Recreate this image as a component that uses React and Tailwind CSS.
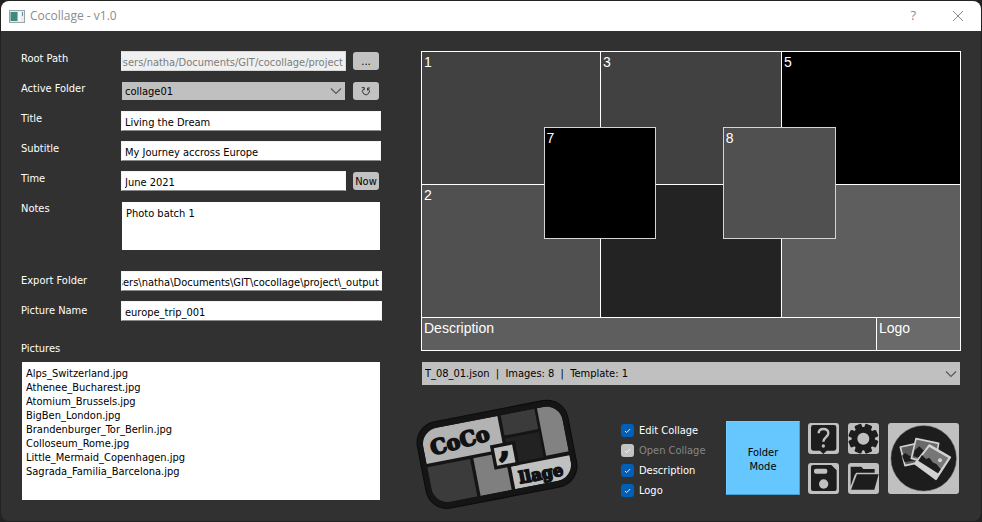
import { useEffect, useRef } from "react";

const inputClass =
  "block h-5 w-full min-w-0 border border-[#f4f4f4] border-b-[#8a8a8a] bg-white px-[3px] pt-0.5 text-[11px] leading-4 text-black outline-none";
const smallButton =
  "my-px mr-0.5 ml-[7px] flex h-[18px] w-[26px] flex-none items-center justify-center rounded-[3px] bg-[#c2c2c2] text-[11px] leading-none text-black";

const pictures = [
  "Alps_Switzerland.jpg",
  "Athenee_Bucharest.jpg",
  "Atomium_Brussels.jpg",
  "BigBen_London.jpg",
  "Brandenburger_Tor_Berlin.jpg",
  "Colloseum_Rome.jpg",
  "Little_Mermaid_Copenhagen.jpg",
  "Sagrada_Familia_Barcelona.jpg",
];

function Field({ id, label, tall, children }) {
  return (
    <div className="flex items-start">
      <label htmlFor={id} className={tall ? "w-25 flex-none leading-5" : "w-25 flex-none leading-4"}>
        {label}
      </label>
      <div className="flex min-w-0 flex-1">{children}</div>
    </div>
  );
}

// A path box that always shows the end of its path.
function PathInput({ id, value, disabled }) {
  const ref = useRef(null);
  useEffect(() => {
    ref.current.scrollLeft = ref.current.scrollWidth;
  }, []);
  return (
    <input
      id={id}
      ref={ref}
      defaultValue={value}
      disabled={disabled}
      className={
        disabled
          ? "block h-5 w-full min-w-0 border border-[#d8d8d8] border-l-[#f0f0f0] bg-[#f0f0f0] pt-0.5 pr-0.5 text-[11px] leading-4 text-[#7d7d7d]"
          : "block h-5 w-full min-w-0 border border-[#f4f4f4] border-b-[#8a8a8a] bg-white pt-0.5 pr-0.5 text-[11px] leading-4 text-black outline-none"
      }
    />
  );
}

function Combo({ id, label, className, children }) {
  return (
    <div className={className}>
      <select
        id={id}
        aria-label={label}
        className="block h-full w-full appearance-none bg-[#c0c0c0] pt-0.5 pr-6 pl-[3px] text-[11px] text-black outline-none"
      >
        {children}
      </select>
      <svg viewBox="0 0 12 8" className="pointer-events-none absolute top-1/2 right-[3px] h-2 w-3 -translate-y-1/2">
        <path d="M1 1.5 6 6.5 11 1.5" fill="none" stroke="#555" strokeWidth="1.1" />
      </svg>
    </div>
  );
}

function Check({ label, disabled }) {
  return (
    <label className={disabled ? "flex h-5 items-center gap-[5px] text-[#868686]" : "flex h-5 items-center gap-[5px] text-white"}>
      <span className="grid">
        <input
          type="checkbox"
          defaultChecked
          disabled={disabled}
          className="col-start-1 row-start-1 size-[13px] appearance-none rounded-[3px] bg-[#005fb8] disabled:bg-[#c3c3c3]"
        />
        <svg viewBox="0 0 13 13" className="pointer-events-none col-start-1 row-start-1 size-[13px]">
          <path d="M4 7 5.6 8.6 9.2 5" fill="none" stroke="#fff" strokeWidth="0.9" />
        </svg>
      </span>
      <span className="pt-0.5">{label}</span>
    </label>
  );
}

function Logo() {
  return (
    <svg viewBox="39 18 504 348" className="-ml-2 h-[116px] w-[168px] flex-none" role="img" aria-label="Cocollage">
      <defs>
        <clipPath id="plate">
          <rect x="-213" y="-113" width="426" height="226" rx="50" />
        </clipPath>
      </defs>
      <g transform="translate(291 193) rotate(-11)">
        <rect x="-230" y="-132" width="460" height="264" rx="64" fill="#151515" stroke="#0c0c0c" strokeWidth="3" />
        <g clipPath="url(#plate)">
          <rect x="-213" y="-113" width="236" height="101" fill="#b3b3b3" />
          <rect x="-213" y="-2" width="131" height="115" fill="#3b3b3b" />
          <rect x="-72" y="-2" width="95" height="115" fill="#7f7f7f" />
          <rect x="33" y="-113" width="103" height="62" fill="#3b3b3b" />
          <rect x="33" y="-42" width="103" height="77" fill="#222" />
          <rect x="144" y="-113" width="69" height="145" fill="#828282" />
          <rect x="34" y="44" width="179" height="69" fill="#c0c0c0" />
          <rect x="-16" y="-30" width="76" height="74" fill="#151515" />
          <rect x="-6" y="-20" width="56" height="54" fill="#c0c0c0" />
        </g>
      </g>
      <g fill="#121212" stroke="#121212" strokeWidth="5" strokeLinejoin="round" fontFamily="'DejaVu Serif', serif" fontWeight="700" textAnchor="middle">
        <text transform="translate(185 173) rotate(-15)" fontSize="62">
          CoCo
        </text>
        <text transform="translate(426 268) rotate(-11)" fontSize="49">
          llage
        </text>
        <text transform="translate(314 200) rotate(-4)" fontSize="90" strokeWidth="7">
          ,
        </text>
      </g>
    </svg>
  );
}

function IconButton({ label, children }) {
  return (
    <button type="button" aria-label={label} className="size-[31px] overflow-hidden rounded-[3px] bg-[#c0c0c0]">
      <svg viewBox="0 0 93 93" className="block size-full" fill="#1d1d1d">
        {children}
      </svg>
    </button>
  );
}

function PhotosIcon() {
  return (
    <svg viewBox="0 0 213 213" className="block size-full" strokeLinejoin="round">
      <circle cx="107" cy="106" r="98" fill="#1d1d1d" stroke="#555" strokeWidth="1.5" />
      <path d="M37 72 84 62 95 118 51 128Z" fill="#5c5c5c" stroke="#d2d2d2" strokeWidth="5" />
      <path d="M42 98 52 90 66 100 74 92 84 112 50 118Z" fill="#1d1d1d" />
      <path d="M84 47 152 61 140 124 70 106Z" fill="#6a6a6a" stroke="#d2d2d2" strokeWidth="5" />
      <path d="M80 82 94 70 106 82 116 76 110 108 76 100Z" fill="#1d1d1d" />
      <path d="M124 66 187 103 144 169 80 122Z" fill="#d2d2d2" stroke="#d2d2d2" strokeWidth="5" />
      <path d="M124 72 181 105 150 151 91 113Z" fill="#777" />
      <path d="M91 113 102 96 114 108 124 104 134 118 146 124 158 139 150 151Z" fill="#1d1d1d" />
      <circle cx="156" cy="112" r="6" fill="#d2d2d2" />
    </svg>
  );
}

export default function App() {
  return (
    <div className="flex min-h-screen bg-[#222] p-px font-['DejaVu_Sans_Condensed','Noto_Sans',sans-serif] text-[11px] text-white">
      <main className="flex flex-1 flex-col overflow-hidden rounded-lg bg-[#313131]">
        <header className="flex h-[30px] flex-none items-center bg-white pr-[17px] pl-2 font-['Open_Sans',sans-serif] text-xs text-[#8c8c8c]">
          <svg viewBox="0 0 16 13" className="mr-[5px] h-[13px] w-4">
            <rect x="0.5" y="0.5" width="15" height="12" fill="#e8eef0" stroke="#9aa5a8" />
            <rect x="1.5" y="2" width="7" height="9" fill="#3f8a80" />
            <rect x="9.5" y="2" width="2" height="9" fill="#fff" />
            <rect x="13" y="2" width="1" height="4" fill="#6f8c96" />
          </svg>
          <h1 className="flex-1">Cocollage - v1.0</h1>
          <button type="button" aria-label="Help" className="mr-9 text-[13px]">
            ?
          </button>
          <button type="button" aria-label="Close">
            <svg viewBox="0 0 12 12" className="block size-3">
              <path d="M1 1 11 11M11 1 1 11" stroke="#888" strokeWidth="1" />
            </svg>
          </button>
        </header>

        <div className="grid flex-1 grid-cols-[361px_1fr] gap-x-[39px] px-5 pt-5">
          <form className="flex flex-col">
            <div className="flex flex-col gap-2.5 pr-px">
              <Field id="root" label="Root Path">
                <PathInput id="root" value="C:/Users/natha/Documents/GIT/cocollage/project" disabled />
                <button type="button" className={smallButton}>
                  ...
                </button>
              </Field>
              <Field id="folder" label="Active Folder">
                <Combo id="folder" label="Active Folder" className="relative m-px h-[18px] flex-1">
                  <option>collage01</option>
                </Combo>
                <button type="button" aria-label="Refresh" className={smallButton}>
                  <svg viewBox="0 0 10 10" className="size-2.5">
                    <path d="M7 2.6A3.4 3.4 0 1 1 2.6 2.9M9 2H6.6V4.6M0.8 1.6H3.2V4" fill="none" stroke="#222" strokeWidth="0.9" />
                  </svg>
                </button>
              </Field>
              <Field id="title" label="Title">
                <input id="title" defaultValue="Living the Dream" className={inputClass} />
              </Field>
              <Field id="subtitle" label="Subtitle">
                <input id="subtitle" defaultValue="My Journey accross Europe" className={inputClass} />
              </Field>
              <Field id="time" label="Time">
                <input id="time" defaultValue="June 2021" className={inputClass} />
                <button type="button" className={smallButton}>
                  Now
                </button>
              </Field>
              <Field id="notes" label="Notes">
                <textarea
                  id="notes"
                  defaultValue="Photo batch 1"
                  className="m-px block h-12 flex-1 resize-none bg-white px-1 py-[5px] text-[11px] leading-[14px] text-black outline-none"
                />
              </Field>
            </div>

            <div className="mt-5 flex flex-col gap-2.5">
              <Field id="export" label="Export Folder" tall>
                <PathInput id="export" value="C:\Users\natha\Documents\GIT\cocollage\project\_output" />
              </Field>
              <Field id="name" label="Picture Name" tall>
                <input id="name" defaultValue="europe_trip_001" className={inputClass} />
              </Field>
            </div>

            <label htmlFor="pictures" className="mt-5 leading-4">
              Pictures
            </label>
            <select
              id="pictures"
              multiple
              className="mt-[5px] mr-0.5 mb-[21px] ml-px block flex-1 overflow-hidden bg-white px-1 py-[5px] text-[11px] text-black outline-none"
            >
              {pictures.map((name) => (
                <option key={name} className="h-3.5 min-h-0 p-0">
                  {name}
                </option>
              ))}
            </select>
          </form>

          <section className="flex flex-col">
            <div className="relative flex aspect-[9/5] w-full flex-col gap-px bg-white p-px font-['Liberation_Sans',sans-serif] text-sm leading-5">
              <div className="grid flex-1 grid-cols-[178fr_180fr_178fr] grid-rows-2 gap-px">
                <div className="bg-[#414141] pl-0.5">1</div>
                <div className="bg-[#414141] pl-0.5">3</div>
                <div className="bg-black pl-0.5">5</div>
                <div className="bg-[#505050] pl-0.5">2</div>
                <div className="bg-[#232323]" />
                <div className="bg-[#5e5e5e]" />
              </div>
              <div className="flex h-8 gap-px">
                <div className="flex-1 bg-[#5e5e5e] pl-0.5">Description</div>
                <div className="w-[83px] bg-[#6a6a6a] pl-0.5">Logo</div>
              </div>
              <div className="absolute top-[25.3%] left-[22.7%] h-[37.3%] w-[20.9%] border border-[#d5d5d5] bg-black pl-0.5">7</div>
              <div className="absolute top-[25.3%] left-[55.9%] h-[37.3%] w-[20.9%] border border-[#d5d5d5] bg-[#505050] pl-0.5">8</div>
            </div>

            <Combo id="template" label="Template" className="relative mx-px mt-[11px] h-[23px]">
              <option>T_08_01.json&nbsp; |&nbsp; Images: 8&nbsp; |&nbsp; Template: 1</option>
            </Combo>

            <div className="mt-[11px] flex items-start pr-0.5">
              <Logo />
              <div className="mt-6 ml-auto w-[105px]">
                <Check label="Edit Collage" />
                <Check label="Open Collage" disabled />
                <Check label="Description" />
                <Check label="Logo" />
              </div>
              <button
                type="button"
                className="mt-[25px] h-[74px] w-[74px] border border-[#72ccff] border-r-[#4a9fd0] border-b-[#4a9fd0] bg-[#66c7ff] pt-1 leading-[14px] text-black"
              >
                Folder
                <br />
                Mode
              </button>
              <div className="mt-[27px] ml-2 grid grid-cols-2 gap-[9px]">
                <IconButton label="Help">
                  <path d="M16 6H78Q85 6 85 13V76Q85 83 78 83H56L46 93 36 83H16Q9 83 9 76V13Q9 6 16 6Z" />
                  <path d="M32 31C32 22 38 18 46 18 55 18 61 23 61 31 61 42 46 43 46 56" fill="none" stroke="#c0c0c0" strokeWidth="7" />
                  <circle cx="46" cy="69" r="5" fill="#c0c0c0" />
                </IconButton>
                <IconButton label="Settings">
                  <circle cx="46" cy="47" r="35" />
                  {[22.5, 67.5, 112.5, 157.5].map((a) => (
                    <rect key={a} x="35" y="2" width="22" height="90" rx="4" transform={`rotate(${a} 46 47)`} />
                  ))}
                  <circle cx="46" cy="47" r="18" fill="#c0c0c0" />
                </IconButton>
                <IconButton label="Save">
                  <path d="M15 6H70L86 22V78Q86 84 80 84H15Q9 84 9 78V12Q9 6 15 6Z" />
                  <rect x="18" y="17" width="40" height="15" rx="6" fill="#c0c0c0" />
                  <circle cx="47" cy="63" r="14" fill="#c0c0c0" />
                </IconButton>
                <IconButton label="Open">
                  <path d="M8 11H40L46 18H80V29H25L20 36 8 70Z" />
                  <path d="M27 34H92L79 80H9Z" />
                </IconButton>
              </div>
              <button type="button" aria-label="Create collage" className="mt-[27px] ml-[9px] size-[71px] overflow-hidden rounded-[3px] bg-[#c0c0c0]">
                <PhotosIcon />
              </button>
            </div>
          </section>
        </div>
      </main>
    </div>
  );
}
